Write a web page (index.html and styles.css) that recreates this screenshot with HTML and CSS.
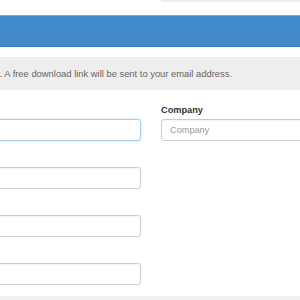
FILE: index.html
```html
<!DOCTYPE html>
<html lang="en">
<head>
    <meta charset="UTF-8">
    <meta name="viewport" content="width=device-width, initial-scale=1.0">
    <title>Free Download</title>
    <link rel="stylesheet" href="styles.css">
</head>
<body>
    <div class="topbar">
        <div class="search"></div>
    </div>

    <div class="banner"></div>

    <div class="notice">
        <p>Please fill in the form below. A free download link will be sent to your email address.</p>
    </div>

    <form class="form">
        <div class="col">
            <div class="field">
                <label for="firstName">First Name</label>
                <input type="text" id="firstName" class="is-focus" placeholder="">
            </div>
            <div class="field">
                <label for="lastName">Last Name</label>
                <input type="text" id="lastName">
            </div>
            <div class="field">
                <label for="email">Email</label>
                <input type="email" id="email">
            </div>
            <div class="field">
                <label for="phone">Phone</label>
                <input type="text" id="phone">
            </div>
        </div>
        <div class="col">
            <div class="field">
                <label for="company">Company</label>
                <input type="text" id="company" placeholder="Company">
            </div>
        </div>
    </form>

    <div class="footer"></div>
</body>
</html>
```

FILE: styles.css
```css
body {
    margin: 0;
    width: 300px;
    height: 300px;
    overflow: hidden;
    background: #fff;
    font-family: 'Liberation Sans', Arial, sans-serif;
    color: #333;
}

.topbar {
    height: 15px;
}

.search {
    margin-left: 161px;
    height: 2px;
    background: #eee;
}

.banner {
    height: 30px;
    background: #428bca;
    border-top: 1px solid #76a9d8;
    border-bottom: 1px solid #3a7cb6;
}

.notice {
    margin-top: 10px;
    height: 33px;
    background: #eee;
    display: flex;
    align-items: center;
    overflow: hidden;
}

.notice p {
    margin: 0 0 0 -114px;
    white-space: nowrap;
    font-size: 9.4px;
    color: #666;
}

.form {
    display: grid;
    grid-template-columns: 290px 290px;
    column-gap: 20px;
    margin: 14px 0 0 -149px;
}

.field {
    margin-bottom: 11px;
}

label {
    display: block;
    font-size: 9.2px;
    line-height: 13px;
    font-weight: bold;
    margin-bottom: 2px;
    color: #333;
}

input {
    display: block;
    box-sizing: border-box;
    width: 100%;
    height: 22px;
    padding: 0 8px;
    border: 1px solid #ccc;
    border-radius: 3px;
    font-family: inherit;
    font-size: 9.2px;
    color: #555;
    background: #fff;
    box-shadow: inset 0 1px 1px rgba(0, 0, 0, 0.04);
}

input::placeholder {
    color: #999;
}

input.is-focus {
    border-color: #a9cde8;
    box-shadow: 0 0 3px rgba(102, 175, 233, 0.35);
}

.footer {
    height: 10px;
    background: #f0f0f0;
}
```
